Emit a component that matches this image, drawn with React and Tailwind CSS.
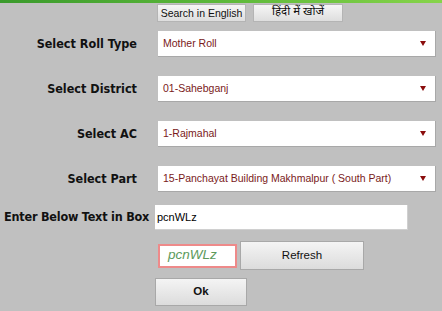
import { useState } from 'react';

const rows = [
    { label: 'Select Roll Type', value: 'Mother Roll' },
    { label: 'Select District', value: '01-Sahebganj' },
    { label: 'Select AC', value: '1-Rajmahal' },
    { label: 'Select Part', value: '15-Panchayat Building Makhmalpur ( South Part)' },
];

const labelFont = { fontFamily: '"DejaVu Sans Condensed", "DejaVu Sans", sans-serif' };

function SelectRow({ label, value }) {
    return (
        <div className="flex items-center h-[26px]">
            <div
                className="w-[137px] text-right font-bold text-[12.5px] text-[#111]"
                style={labelFont}
            >
                {label}
            </div>
            <div className="ml-[21px] w-[278px] h-[26px] bg-white border-r border-b border-[#a8a8a8] flex items-center justify-between pl-[5px] pr-[9px]">
                <span className="text-[10.5px] text-[#7a1a1a] font-['Liberation_Sans',Arial,sans-serif]">{value}</span>
                <svg width="6" height="5" viewBox="0 0 6 5">
                    <path d="M0 0 L6 0 L3 5 Z" fill="#8b0d0d" />
                </svg>
            </div>
        </div>
    );
}

function App() {
    const [text, setText] = useState('pcnWLz');

    return (
        <div className="w-[442px] h-[311px] bg-[#c0c0c0] overflow-hidden font-['Liberation_Sans',Arial,sans-serif]">
            <div className="h-[3px] bg-linear-to-r from-[#3a9a2c] via-[#5cb83a] to-[#86d44a]" />

            {/* language buttons */}
            <div className="flex pl-[157px] mt-[1px] gap-[7px]">
                <button className="w-[89px] h-[18px] px-0 whitespace-nowrap border border-[#b4b4b4] bg-linear-to-b from-[#f6f6f6] to-[#dedede] text-[10.5px] text-[#111] leading-none">
                    Search in English
                </button>
                <button className="w-[90px] h-[18px] px-0 whitespace-nowrap border border-[#b4b4b4] bg-linear-to-b from-[#f6f6f6] to-[#dedede] text-[11.5px] text-[#111] leading-none font-['Noto_Sans_Devanagari','Lohit_Devanagari','Noto_Sans',sans-serif]">
                    हिंदी में खोजें
                </button>
            </div>

            {/* dropdowns */}
            <div className="flex flex-col gap-[19px] mt-[9px]">
                {rows.map((r) => (
                    <SelectRow key={r.label} label={r.label} value={r.value} />
                ))}
            </div>

            {/* captcha input */}
            <div className="flex items-center mt-[13px] h-[25px]">
                <div
                    className="w-[155px] flex-none pl-[4px] font-bold text-[12.5px] tracking-[-0.2px] text-[#111] whitespace-nowrap"
                    style={labelFont}
                >
                    Enter Below Text in Box
                </div>
                <input
                    value={text}
                    onChange={(e) => setText(e.target.value)}
                    className="w-[253px] h-[25px] bg-white pl-[2px] text-[11px] text-black outline-none border-r border-b border-[#d0d0d0]"
                />
            </div>

            <div className="flex items-center mt-[11px] h-[29px]">
                <div className="ml-[158px] w-[79px] h-[24px] bg-white border-2 border-[#ee8a8a] flex items-center pl-[8px]">
                    <span className="italic text-[13.5px] text-[#5c9a5c]">pcnWLz</span>
                </div>
                <button className="ml-[3px] w-[124px] h-[29px] border border-[#a8a8a8] bg-linear-to-b from-[#f4f4f4] to-[#dcdcdc] text-[11.5px] text-[#111]">
                    Refresh
                </button>
            </div>

            <button className="ml-[155px] mt-[8px] w-[92px] h-[28px] border border-[#a8a8a8] bg-linear-to-b from-[#f4f4f4] to-[#dcdcdc] text-[11.5px] font-bold text-[#111]">
                Ok
            </button>
        </div>
    );
}

export default App;
